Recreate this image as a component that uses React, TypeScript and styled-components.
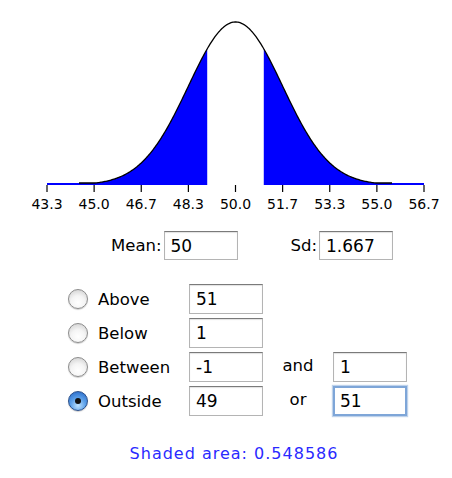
import styled, { createGlobalStyle, css } from "styled-components";

const GlobalStyle = createGlobalStyle`
    html, body {
        margin: 0;
        padding: 0;
        background: #ffffff;
    }
    body {
        font-family: "DejaVu Sans", "Liberation Sans", sans-serif;
        color: #000;
    }
`;

const MEAN = 50;
const SD = 1.667;
const LOW = 49;
const HIGH = 51;

const X0 = 47;
const X1 = 424;
const BASE = 185;
const PEAK = 163;
const MIN_V = MEAN - 4 * SD;
const MAX_V = MEAN + 4 * SD;

const toX = (v: number) => X0 + ((v - MIN_V) / (MAX_V - MIN_V)) * (X1 - X0);
const toV = (x: number) => MIN_V + ((x - X0) / (X1 - X0)) * (MAX_V - MIN_V);
// tails never drop below a 2px sliver so the shaded edge stays visible
const curveY = (x: number) => {
    const z = (toV(x) - MEAN) / SD;
    return Math.min(BASE - 2, BASE - PEAK * Math.exp(-(z * z) / 2));
};

const curvePoints = (from: number, to: number) => {
    const pts: string[] = [];
    for (let x = from; x < to; x += 1) pts.push(`${x.toFixed(1)},${curveY(x).toFixed(2)}`);
    pts.push(`${to.toFixed(1)},${curveY(to).toFixed(2)}`);
    return pts;
};

const areaPath = (from: number, to: number) =>
    `M${from},${BASE} L${curvePoints(from, to).join(" L")} L${to},${BASE} Z`;

const Page = styled.div`
    width: 452px;
    height: 478px;
    display: flex;
    flex-direction: column;
`;

const Chart = styled.svg`
    display: block;
    width: 452px;
    height: 216px;
`;

const TickLabel = styled.text`
    font-family: "DejaVu Sans", sans-serif;
    font-size: 14px;
    fill: #000;
`;

const ParamRow = styled.div`
    display: flex;
    align-items: center;
    margin-top: 15px;
    padding-left: 111px;
    height: 29px;
`;

const ParamGroup = styled.div<{ $gap?: number }>`
    display: flex;
    align-items: center;
    margin-left: ${(p) => p.$gap ?? 0}px;
`;

const Label = styled.span`
    font-size: 16.5px;
    line-height: 20px;
    white-space: nowrap;
`;

const Field = styled.div<{ $focused?: boolean }>`
    box-sizing: border-box;
    width: 74px;
    height: 29px;
    margin-left: 2px;
    padding: 0 6px;
    display: flex;
    align-items: center;
    font-size: 17px;
    background: #fff;
    border: 1px solid #b4b4b4;
    border-top-color: #7a7a7a;
    box-shadow: inset 0 1px 1px rgba(0, 0, 0, 0.12);
    ${(p) =>
        p.$focused &&
        css`
            border: 2px solid #7ea6d8;
            padding: 0 5px;
            box-shadow: 0 0 1px 1px rgba(126, 166, 216, 0.5);
        `}
`;

const Options = styled.div`
    display: grid;
    grid-template-columns: 20px 101px 74px 70px 74px;
    row-gap: 4px;
    grid-auto-rows: 30px;
    align-items: center;
    margin-top: 24px;
    padding-left: 68px;
`;

const OptionLabel = styled.span`
    font-size: 16.5px;
    padding-left: 10px;
`;

const Joiner = styled.span`
    font-size: 16.5px;
    text-align: center;
    margin-top: -4px;
`;

const GridField = styled(Field)`
    margin-left: 0;
    height: 30px;
`;

const Radio = styled.span<{ $checked?: boolean }>`
    box-sizing: border-box;
    width: 20px;
    height: 20px;
    border-radius: 50%;
    display: flex;
    align-items: center;
    justify-content: center;
    border: 1px solid #8c8c8c;
    background: radial-gradient(circle at 50% 70%, #ffffff 0%, #f4f4f4 45%, #c9c9c9 100%);
    box-shadow: 0 1px 1px rgba(0, 0, 0, 0.2);
    ${(p) =>
        p.$checked &&
        css`
            border-color: #2a4f8a;
            background: radial-gradient(circle at 50% 75%, #bfe3ff 0%, #5da1ea 45%, #1d5fc2 100%);
            &::after {
                content: "";
                width: 6px;
                height: 6px;
                border-radius: 50%;
                background: #111;
            }
        `}
`;

const Result = styled.div`
    margin-top: 28px;
    margin-left: 16px;
    text-align: center;
    font-size: 16px;
    letter-spacing: 1px;
    color: #2a2aff;
`;

const ticks = [43.3, 45.0, 46.7, 48.3, 50.0, 51.7, 53.3, 55.0, 56.7];

const options = [
    { name: "Above", a: "51" },
    { name: "Below", a: "1" },
    { name: "Between", a: "-1", join: "and", b: "1" },
    { name: "Outside", a: "49", join: "or", b: "51", checked: true },
];

const NormalCurve = () => {
    const lowX = toX(LOW);
    const highX = toX(HIGH);
    return (
        <Chart viewBox="0 0 452 216">
            <path d={areaPath(X0, lowX)} fill="#0000ff" />
            <path d={areaPath(highX, X1)} fill="#0000ff" />
            <polyline
                points={curvePoints(X0 + 32, X1 - 32).join(" ")}
                fill="none"
                stroke="#000"
                strokeWidth={1.3}
            />
            {ticks.map((t, i) => {
                const x = X0 + (i * (X1 - X0)) / 8;
                return (
                    <g key={t}>
                        <line x1={x} y1={BASE} x2={x} y2={BASE + 7} stroke="#000" strokeWidth={1.2} />
                        <TickLabel x={x} y={209} textAnchor="middle">
                            {t.toFixed(1)}
                        </TickLabel>
                    </g>
                );
            })}
        </Chart>
    );
};

export default function App() {
    return (
        <Page>
            <GlobalStyle />
            <NormalCurve />
            <ParamRow>
                <ParamGroup>
                    <Label>Mean:</Label>
                    <Field>50</Field>
                </ParamGroup>
                <ParamGroup $gap={53}>
                    <Label>Sd:</Label>
                    <Field>1.667</Field>
                </ParamGroup>
            </ParamRow>
            <Options>
                {options.map((o) => (
                    <>
                        <Radio key={`${o.name}-r`} $checked={o.checked} />
                        <OptionLabel key={`${o.name}-l`}>{o.name}</OptionLabel>
                        <GridField key={`${o.name}-a`}>{o.a}</GridField>
                        <Joiner key={`${o.name}-j`}>{o.join ?? ""}</Joiner>
                        {o.b ? (
                            <GridField key={`${o.name}-b`} $focused={o.checked}>
                                {o.b}
                            </GridField>
                        ) : (
                            <span key={`${o.name}-b`} />
                        )}
                    </>
                ))}
            </Options>
            <Result>Shaded area: 0.548586</Result>
        </Page>
    );
}
